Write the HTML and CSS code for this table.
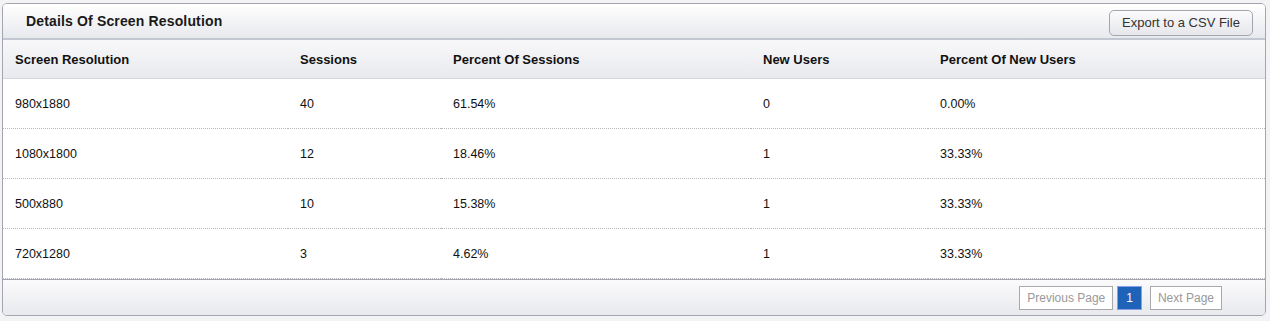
FILE: index.html
```html
<!DOCTYPE html>
<html>
<head>
<meta charset="utf-8">
<link rel="stylesheet" href="styles.css">
</head>
<body>
<div class="panel">
  <div class="panel-head">
    <h2 class="title">Details Of Screen Resolution</h2>
    <button class="export">Export to a CSV File</button>
  </div>
  <table class="grid">
    <colgroup>
      <col class="c1"><col class="c2"><col class="c3"><col class="c4"><col class="c5">
    </colgroup>
    <thead>
      <tr><th>Screen Resolution</th><th>Sessions</th><th>Percent Of Sessions</th><th>New Users</th><th>Percent Of New Users</th></tr>
    </thead>
    <tbody>
      <tr><td>980x1880</td><td>40</td><td>61.54%</td><td>0</td><td>0.00%</td></tr>
      <tr><td>1080x1800</td><td>12</td><td>18.46%</td><td>1</td><td>33.33%</td></tr>
      <tr><td>500x880</td><td>10</td><td>15.38%</td><td>1</td><td>33.33%</td></tr>
      <tr><td>720x1280</td><td>3</td><td>4.62%</td><td>1</td><td>33.33%</td></tr>
    </tbody>
  </table>
  <div class="panel-foot">
    <span class="pg">Previous Page</span>
    <span class="pg current">1</span>
    <span class="pg">Next Page</span>
  </div>
</div>
</body>
</html>
```

FILE: styles.css
```css
html, body {
  margin: 0;
  padding: 0;
  background: #f3f3f5;
  font-family: "Liberation Sans", Arial, sans-serif;
}
.panel {
  margin: 3px 0 0 2px;
  width: 1262px;
  border: 1px solid #a3a6b0;
  border-radius: 5px;
  background: #fff;
  overflow: hidden;
}
.panel-head {
  height: 34px;
  display: flex;
  align-items: center;
  justify-content: space-between;
  padding: 0 12px 0 23px;
  background: linear-gradient(#ffffff, #e8e9ed);
  border-bottom: 2px solid #c3c7d1;
}
.title {
  margin: 0;
  font-size: 14px;
  letter-spacing: 0.15px;
  font-weight: bold;
  color: #1a1a1a;
}
.export {
  font-family: "Liberation Sans", Arial, sans-serif;
  font-size: 13px;
  color: #333;
  height: 26px;
  width: 144px;
  margin-top: 3px;
  border: 1px solid #a3a6b0;
  border-radius: 5px;
  background: linear-gradient(#fbfbfc, #e6e7eb);
  padding: 0;
}
.grid {
  width: 100%;
  border-collapse: collapse;
  table-layout: fixed;
  font-size: 12.5px;
}
.c1 { width: 285px; }
.c2 { width: 153px; }
.c3 { width: 310px; }
.c4 { width: 177px; }
.grid th {
  height: 38px;
  padding: 0 0 0 12px;
  text-align: left;
  font-size: 13px;
  font-weight: bold;
  color: #111;
  background: linear-gradient(#f8f8fa, #e9eaee);
  border-bottom: 1px solid #d3d7e0;
}
.grid td {
  height: 49px;
  padding: 0 0 0 12px;
  color: #111;
  border-bottom: 1px dotted #b8b8b8;
}
.panel-foot {
  height: 35px;
  border-top: 1px solid #a3a6b0;
  background: linear-gradient(#fbfbfc, #e8e9ed);
  display: flex;
  align-items: center;
  justify-content: flex-end;
  padding-right: 43px;
  font-size: 12px;
}
.pg {
  height: 22px;
  line-height: 22px;
  padding: 0 7px;
  border: 1px solid #a9a9a9;
  background: #fff;
  color: #999;
  margin-left: 6px;
}
.pg.current {
  background: #1f63b8;
  border-color: #8aa0e6;
  color: #fff;
  padding: 0 8px;
  margin-left: 4px;
  margin-right: 2px;
}
```
